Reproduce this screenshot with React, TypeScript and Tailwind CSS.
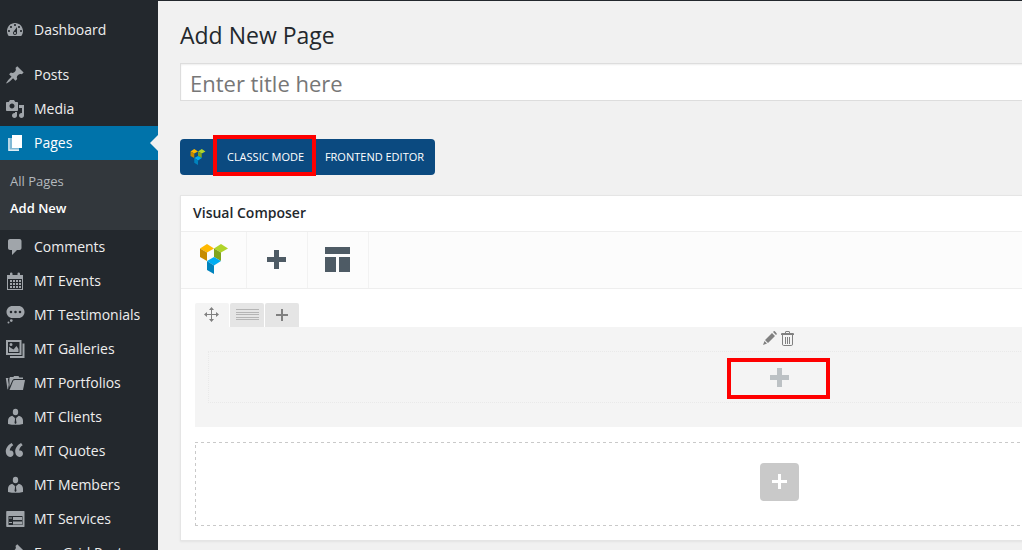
import type { ReactNode } from "react";

function Icon({ children }: { children: ReactNode }) {
  return (
    <svg width="20" height="20" viewBox="0 0 20 20" fill="currentColor" fillRule="evenodd" className="shrink-0">
      {children}
    </svg>
  );
}

const pin = (
  <path d="M10.44 3.02l1.82-1.82 6.36 6.35-1.83 1.82c-1.05-.68-2.48-.57-3.41.36l-.75.75c-.92.93-1.04 2.35-.35 3.41l-1.83 1.82-2.41-2.41-2.8 2.79c-.42.42-3.38 2.71-3.8 2.29s1.86-3.39 2.28-3.81l2.79-2.79L4.1 9.36l1.83-1.82c1.05.69 2.48.57 3.4-.36l.75-.75c.93-.92 1.05-2.35.36-3.41z" />
);
const person = (
  <>
    <ellipse cx="10.5" cy="5" rx="2.7" ry="3.3" />
    <path d="M7.200 8.800 10.500 11.500 13.800 8.800c2.700.7 4.200 2.400 4.200 5V17q-7.500 1.700-15 0v-3.200C3 11.200 4.500 9.500 7.200 8.800z" />
    <path d="M9.800 11.200h1.400l-.2 1.200.5 3.600-1 1-1-1 .5-3.600z" fill="#23282d" />
  </>
);

const icons = {
  dashboard: (
    <path d="M3.76 16h12.48c1.1-1.37 1.76-3.11 1.76-5 0-4.42-3.58-8-8-8s-8 3.58-8 8c0 1.89.66 3.63 1.76 5zM10 4c.55 0 1 .45 1 1s-.45 1-1 1-1-.45-1-1 .45-1 1-1zM6 6c.55 0 1 .45 1 1s-.45 1-1 1-1-.45-1-1 .45-1 1-1zm8 0c.55 0 1 .45 1 1s-.45 1-1 1-1-.45-1-1 .45-1 1-1zm-5.37 5.55L12 7v6c0 1.1-.9 2-2 2s-2-.9-2-2c0-.57.24-1.08.63-1.45zM4 10c.55 0 1 .45 1 1s-.45 1-1 1-1-.45-1-1 .45-1 1-1zm12 0c.55 0 1 .45 1 1s-.45 1-1 1-1-.45-1-1 .45-1 1-1zm-5 3c0-.55-.45-1-1-1s-1 .45-1 1 .45 1 1 1 1-.45 1-1z" />
  ),
  pin,
  media: (
    <path d="M13 11V4c0-.55-.45-1-1-1h-1.67L9 1H5L3.67 3H2c-.55 0-1 .45-1 1v7c0 .55.45 1 1 1h10c.55 0 1-.45 1-1zM7 4.500c1.380 0 2.500 1.120 2.500 2.500S8.380 9.500 7 9.500 4.500 8.380 4.500 7 5.620 4.500 7 4.500zM14 6h5v10.500c0 1.380-1.120 2.500-2.500 2.500S14 17.880 14 16.500s1.120-2.500 2.500-2.500c.17 0 .34.02.5.05V9h-3V6zm-4 8.050V13h2v3.500c0 1.380-1.120 2.500-2.500 2.500S7 17.880 7 16.500 8.120 14 9.500 14c.17 0 .34.02.5.05z" />
  ),
  page: (
    <>
      <path d="M7 2h10v13H7z" />
      <path d="M3.300 5H7v10h7v2.800H3.300z" opacity=".5" />
      <path d="M3.300 5H4.500v11.500h9.500V18H3.300z" opacity=".8" />
    </>
  ),
  comment: (
    <path d="M5 2h9.500c1.100 0 2 .9 2 2v7c0 1.100-.9 2-2 2H12l-5 5v-5H5c-1.100 0-2-.9-2-2V4c0-1.100.9-2 2-2z" />
  ),
  calendar: (
    <path d="M2 4h3V2.500q0-1 1.200-1t1.300 1V4h5V2.500q0-1 1.200-1t1.300 1V4h3v15H2zM3 8v10h14V8zM5 9h2v2H5zM8 9h2v2H8zM11 9h2v2h-2zM14 9h2v2h-2zM5 12h2v2H5zM8 12h2v2H8zM11 12h2v2h-2zM14 12h2v2h-2zM5 15h2v2H5zM8 15h2v2H8zM11 15h2v2h-2zM14 15h2v2h-2z" />
  ),
  status: (
    <path d="M7.500 1h6C17 1 19.500 3.700 19.500 7s-2.500 6-6 6h-6C4 13 1.500 10.300 1.500 7S4 1 7.500 1zM6 5.700a1.300 1.300 0 1 0 0 2.600 1.300 1.300 0 0 0 0-2.600zm4.500 0a1.300 1.300 0 1 0 0 2.600 1.300 1.300 0 0 0 0-2.600zm4.500 0a1.300 1.300 0 1 0 0 2.600 1.300 1.300 0 0 0 0-2.600zM6.300 14.200a1.400 1.400 0 1 0 0 2.800 1.400 1.400 0 0 0 0-2.800zM3.500 16.600a1 1 0 1 0 0 2 1 1 0 0 0 0-2z" />
  ),
  gallery: (
    <path d="M1 1h15.500v15H1zM3 3v11h11.500V3zM4 13V7.500l2 1.500 2.500 1.500 3-3.500 2 3v3zM6 4a1.500 1.500 0 1 1 0 3 1.500 1.500 0 0 1 0-3zM17.500 4.500h2V19H5v-2h12.500z" />
  ),
  portfolio: (
    <>
      <path d="M.8 5h2.700l-.5 1.500.8 5-.7 4.500-.6.500z" />
      <path d="M4.300 5.500 5 4h3.500L9 3h4.500l.8 1.500H18V6H8.800L7.300 7.500 4.500 14z" />
      <path d="M4.500 17 8.300 7.500 10 7h10l-2 10z" />
    </>
  ),
  person,
  quote: (
    <path d="M8.540 12.740c0-.87-.24-1.610-.72-2.220-.73-.92-2.140-1.030-2.960-.85-.34-1.930 1.300-4.390 3.420-5.450L6.650 1.940C3.450 3.460.31 6.960.85 11.370 1.190 14.160 2.800 16 5.080 16c1 0 1.830-.29 2.480-.88.66-.59.98-1.380.98-2.380zm9.430 0c0-.87-.24-1.610-.72-2.220-.73-.92-2.140-1.030-2.960-.85-.34-1.930 1.300-4.390 3.420-5.450l-1.630-2.280c-3.200 1.520-6.340 5.020-5.800 9.430.34 2.790 1.950 4.630 4.230 4.630 1 0 1.830-.29 2.480-.88.66-.59.98-1.380.98-2.380z" />
  ),
  list: (
    <path d="M2 2h17c.3 0 .5.200.5.500V17.500c0 .3-.2.500-.5.500H2c-.5 0-.8-.3-.8-.7V2.700C1.200 2.300 1.500 2 2 2zM3.500 7v9h14V7zM4 8.500h3v1H4zM8 8h9v3H8zM4 13h3v1H4zM8 12.500h9v3H8z" />
  ),
};

type Item = { label: string; icon: keyof typeof icons };

const lower: Item[] = [
  { label: "Comments", icon: "comment" },
  { label: "MT Events", icon: "calendar" },
  { label: "MT Testimonials", icon: "status" },
  { label: "MT Galleries", icon: "gallery" },
  { label: "MT Portfolios", icon: "portfolio" },
  { label: "MT Clients", icon: "person" },
  { label: "MT Quotes", icon: "quote" },
  { label: "MT Members", icon: "person" },
  { label: "MT Services", icon: "list" },
  { label: "Ess. Grid Posts", icon: "pin" },
];

function MenuItem({ label, icon }: Item) {
  return (
    <a className="flex h-[34px] shrink-0 items-center gap-[9px] pl-[5px] text-[14px] leading-[18px] whitespace-nowrap text-[#eee]">
      <span className="text-[#a0a5aa]">
        <Icon>{icons[icon]}</Icon>
      </span>
      {label}
    </a>
  );
}

function Cubes({ className }: { className: string }) {
  return (
    <svg viewBox="0 0 28 30" className={className}>
      <path d="M0 4.500 7 0l7 4.500-7 4z" fill="#ffb900" />
      <path d="M0 4.500 7 8.500v8.500L0 13z" fill="#c68b00" />
      <path d="M14 4.500 21 0l7 4.500-7 4z" fill="#b0d42a" />
      <path d="m14 4.500 7 4V17l-7-4z" fill="#80a41c" />
      <path d="m7 17 7-4 7 4-7 4.500z" fill="#00adf2" />
      <path d="m7 17 7 4.500V30l-7-4z" fill="#0083bd" />
    </svg>
  );
}

function Plus({ size, bar, className }: { size: number; bar: number; className: string }) {
  const a = (size - bar) / 2;
  return (
    <svg width={size} height={size} className={className} fill="currentColor" shapeRendering="crispEdges">
      <rect x={a} width={bar} height={size} />
      <rect y={a} width={size} height={bar} />
    </svg>
  );
}

function Sidebar() {
  return (
    <nav className="flex h-full w-[158px] shrink-0 flex-col overflow-hidden bg-[#23282d] pt-[13px]">
      <MenuItem label="Dashboard" icon="dashboard" />
      <div className="h-[11px] shrink-0" />
      <MenuItem label="Posts" icon="pin" />
      <MenuItem label="Media" icon="media" />
      <a className="flex h-[34px] shrink-0 items-center gap-[9px] bg-[#0073aa] pl-[5px] text-[14px] leading-[18px] text-white">
        <Icon>{icons.page}</Icon>
        <span className="flex-1">Pages</span>
        <svg width="8" height="16" fill="#f1f1f1">
          <path d="M8 0v16L0 8z" />
        </svg>
      </a>
      <div className="flex h-[70px] shrink-0 flex-col bg-[#32373c] pt-[8px] pl-[10px] text-[13px] leading-[27px]">
        <a className="text-[#b4b9be]">All Pages</a>
        <a className="font-semibold text-white">Add New</a>
      </div>
      {lower.map((item) => (
        <MenuItem key={item.label} {...item} />
      ))}
    </nav>
  );
}

function ModeSwitch() {
  return (
    <div className="mt-[34px] flex h-[41px] shrink-0 items-end text-[11px] text-white">
      <div className="mb-px flex h-9 w-[33px] items-center rounded-l-[4px] bg-[#0b4a80] pl-[10px]">
        <Cubes className="h-4 w-4" />
      </div>
      <button className="h-[41px] w-[103px] border-4 border-[#fe0000] bg-[#0b4a80] pt-[3px] pl-[2px] whitespace-nowrap">
        CLASSIC MODE
      </button>
      <button className="mb-px h-9 w-[119px] rounded-r-[4px] bg-[#0b4a80] pr-[2px] whitespace-nowrap">
        FRONTEND EDITOR
      </button>
    </div>
  );
}

function RowControls() {
  return (
    <div className="flex h-6 gap-px">
      <button className="flex w-[34px] items-start rounded-t-[2px] bg-[#f4f4f4] pt-1 pl-[9px]">
        <svg width="15" height="15" viewBox="0 0 15 15" fill="#808080">
          <path d="M7 2h1v11H7zM2 7h11v1H2zM7.500 0 10 3H5zM7.500 15 5 12h5zM0 7.500 3 5v5zM15 7.500 12 10V5z" />
        </svg>
      </button>
      <button className="flex w-[34px] items-start rounded-t-[2px] bg-[#e5e5e5] pt-[6px] pl-[6px]">
        <svg width="23" height="12" stroke="#b5b5b5" shapeRendering="crispEdges">
          <path d="M0 .5h23M0 3.500h23M0 5.500h23M0 8.500h23M0 10.500h23" />
        </svg>
      </button>
      <button className="flex w-[34px] items-center justify-center rounded-t-[2px] bg-[#e5e5e5]">
        <Plus size={12} bar={2} className="text-[#808080]" />
      </button>
    </div>
  );
}

function Composer() {
  return (
    <section className="mt-[19px] flex h-[346px] w-[1197px] shrink-0 flex-col border border-[#e5e5e5] bg-white shadow-[0_1px_2px_rgba(0,0,0,0.06)]">
      <h2 className="h-[35px] shrink-0 pl-3 text-[14px] leading-[34px] font-semibold text-[#23282d]">Visual Composer</h2>
      <div className="flex h-[58px] shrink-0 border-y border-[#eee] bg-[#fcfcfc]">
        <div className="flex w-[66px] items-start border-r border-[#f2f2f2] pt-3 pl-[19px]">
          <Cubes className="h-[30px] w-7" />
        </div>
        <div className="flex w-[61px] items-start justify-center border-r border-[#f2f2f2] pt-[18px] pr-[2px]">
          <Plus size={19} bar={5} className="text-[#4e5b65]" />
        </div>
        <div className="flex w-[61px] items-start justify-center border-r border-[#f2f2f2] pt-[15px] pr-[2px]">
          <svg width="25" height="25" fill="#4e5b65" shapeRendering="crispEdges">
            <path d="M0 0h25v7H0zM0 10h11v15H0zM14 10h11v15H14z" />
          </svg>
        </div>
      </div>
      <div className="flex flex-col px-[14px] pt-[14px]">
        <RowControls />
        <div className="flex h-[100px] flex-col bg-[#f4f4f4] px-[13px]">
          <div className="flex h-6 shrink-0 items-start justify-center gap-[4px] pt-1 pr-px">
            <svg width="14" height="14" viewBox="0 0 14 14" fill="#808080">
              <path d="m10 1 1-1q1-.4 3 3l-1 1zM9 2l3 3-7 7-3-3zM1.500 10 4 12.500 0 14z" />
            </svg>
            <svg width="13" height="15" viewBox="0 0 13 15" fill="none" stroke="#808080">
              <path d="M0 3.500h13M.5 3.500v-1h12v1M4.500 2V1q0-.5.500-.500h3q.5 0 .5.500v1M1.500 4v9q0 1.500 1 1.500h8q1 0 1-1.500V4M4.500 6v7M6.500 6v7M8.500 6v7" />
            </svg>
          </div>
          <div className="flex h-[52px] shrink-0 items-center justify-center border border-dotted border-[#e9e9e9]">
            <div className="mt-[3px] flex h-[41px] w-[103px] items-center justify-center border-4 border-[#fe0000]">
              <Plus size={19} bar={5} className="mb-[2px] ml-[2px] text-[#bcc1c4]" />
            </div>
          </div>
        </div>
        <div className="mt-[15px] flex h-[84px] items-center justify-center bg-[linear-gradient(90deg,#c9c9c9_50%,transparent_50%),linear-gradient(90deg,#c9c9c9_50%,transparent_50%),linear-gradient(transparent_50%,#c9c9c9_50%)] bg-[size:6px_1px,6px_1px,1px_6px] bg-[position:left_top,left_bottom,left_top] [background-repeat:repeat-x,repeat-x,repeat-y]">
          <button className="mb-[5px] ml-[2px] flex h-[38px] w-[39px] items-center justify-center rounded-[4px] bg-[#c9c9c9]">
            <Plus size={15} bar={3} className="text-white" />
          </button>
        </div>
      </div>
    </section>
  );
}

export default function App() {
  return (
    <div className="flex h-[550px] w-[1022px] overflow-hidden bg-[#f1f1f1] font-['Open_Sans',sans-serif]">
      <Sidebar />
      <main className="flex min-w-0 flex-1 flex-col overflow-hidden border-t border-[#23282d] pl-[22px]">
        <h1 className="mt-[18px] h-[44px] shrink-0 text-[23px] leading-[33px] text-[#23282d]">Add New Page</h1>
        <div className="h-[38px] w-[1197px] shrink-0 border border-[#ddd] bg-white pl-[9px] text-[22px] leading-[38px] text-[#777] shadow-[inset_0_1px_2px_rgba(0,0,0,0.07)]">
          Enter title here
        </div>
        <ModeSwitch />
        <Composer />
      </main>
    </div>
  );
}
